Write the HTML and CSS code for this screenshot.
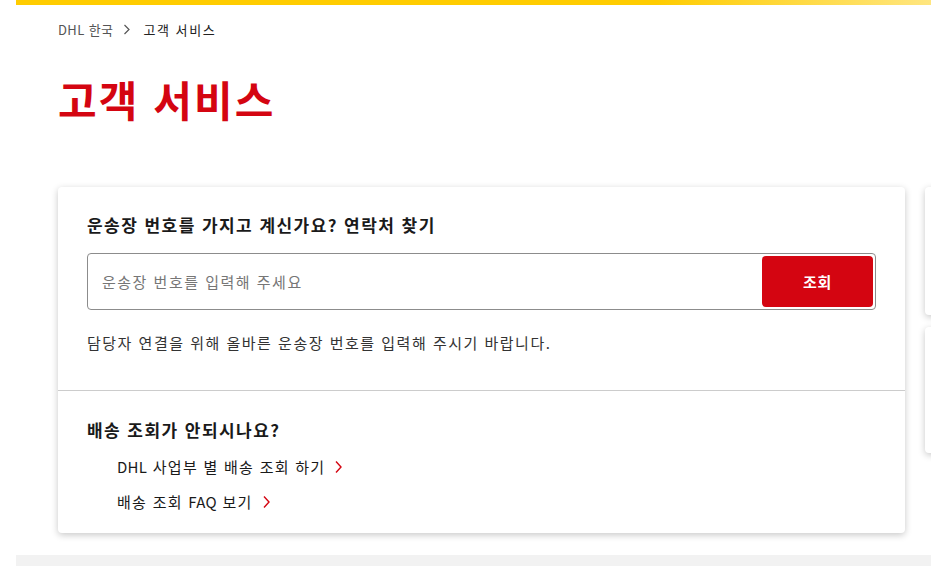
FILE: index.html
```html
<!DOCTYPE html>
<html lang="ko">
<head>
  <meta charset="UTF-8" />
  <meta name="viewport" content="width=device-width, initial-scale=1.0"/>
  <title>고객 서비스 | DHL 한국</title>
  <link rel="stylesheet" href="styles.css">
</head>
<body>
  <div class="page">
    <!-- ================== Top brand bar ================== -->
    <div class="top-bar"></div>

    <div class="content">
      <!-- ================== Breadcrumb ================== -->
      <nav class="breadcrumb">
        <a href="#">DHL 한국</a>
        <svg class="crumb-arrow" width="8" height="11" viewBox="0 0 8 11"><path d="M1.5 1 L6 5.5 L1.5 10" fill="none" stroke="#555" stroke-width="1.2"/></svg>
        <span class="current">고객 서비스</span>
      </nav>

      <h1 class="page-title">고객 서비스</h1>

      <div class="card-row">
        <!-- ================== Tracking card ================== -->
        <div class="card">
          <section class="card-section">
            <h3>운송장 번호를 가지고 계신가요? 연락처 찾기</h3>
            <form class="track-form" onsubmit="return false;">
              <input type="text" placeholder="운송장 번호를 입력해 주세요" />
              <button type="submit">조회</button>
            </form>
            <p class="hint">담당자 연결을 위해 올바른 운송장 번호를 입력해 주시기 바랍니다.</p>
          </section>

          <section class="card-section second">
            <h3>배송 조회가 안되시나요?</h3>
            <ul class="link-list">
              <li><a href="#"><span><span class="latin">DHL</span> 사업부 별 배송 조회 하기</span> <svg width="9" height="14" viewBox="0 0 9 14"><path d="M2 1.5 L7 7 L2 12.5" fill="none" stroke="#d40511" stroke-width="1.4"/></svg></a></li>
              <li><a href="#"><span>배송 조회 <span class="latin">FAQ</span> 보기</span> <svg width="9" height="14" viewBox="0 0 9 14"><path d="M2 1.5 L7 7 L2 12.5" fill="none" stroke="#d40511" stroke-width="1.4"/></svg></a></li>
            </ul>
          </section>
        </div>

        <!-- ================== Side cards (cut off) ================== -->
        <div class="side-col">
          <div class="side-card tall"></div>
          <div class="side-card"></div>
        </div>
      </div>
    </div>

    <div class="footer-band"></div>
  </div>
</body>
</html>
```

FILE: styles.css
```css
* {
  box-sizing: border-box;
}
body {
  margin: 0;
  font-family: "Noto Sans CJK KR", "Noto Sans", Arial, sans-serif;
  color: #1a1a1a;
  background-color: #fff;
  overflow: hidden;
}
.page {
  padding-left: 16px;
  width: 931px;
  height: 566px;
  overflow: hidden;
}
.top-bar {
  height: 5px;
  background: linear-gradient(90deg, #ffcc00 0%, #ffcc00 70%, #ffe680 100%);
}
.content {
  padding: 0 0 0 42px;
}
.breadcrumb {
  display: flex;
  align-items: center;
  gap: 10px;
  height: 20px;
  margin-top: 14px;
  font-size: 13px;
  letter-spacing: 0.08em;
}
.breadcrumb a {
  color: #555;
  text-decoration: none;
  letter-spacing: 0.03em;
}
.breadcrumb .current {
  color: #222;
  margin-left: 2px;
  letter-spacing: 0.12em;
}
.page-title {
  margin: 30px 0 0;
  font-size: 42px;
  line-height: 60px;
  font-weight: 700;
  color: #d40511;
  letter-spacing: 0.05em;
}
.card-row {
  display: flex;
  gap: 20px;
  margin-top: 58px;
}
.card {
  flex: 0 0 847px;
  background: #fff;
  border-radius: 4px;
  box-shadow: 0 2px 7px rgba(0,0,0,0.22);
}
.card-section {
  padding: 26px 29px 36px;
}
.card-section.second {
  border-top: 1px solid #cccccc;
  padding-top: 27px;
  padding-bottom: 9px;
}
.card-section h3 {
  margin: 0;
  font-size: 17px;
  line-height: 24px;
  font-weight: 700;
  color: #1a1a1a;
  letter-spacing: 0.085em;
}
.track-form {
  display: flex;
  margin-top: 16px;
  height: 57px;
  padding: 2px;
  border: 1px solid #8c8c8c;
  border-radius: 4px;
}
.track-form input {
  flex: 1;
  border: none;
  outline: none;
  padding: 0 12px;
  font-family: inherit;
  font-size: 15px;
  color: #333;
  letter-spacing: 0.1em;
}
.track-form input::placeholder {
  color: #767676;
}
.track-form button {
  width: 111px;
  border: none;
  border-radius: 4px;
  background-color: #d40511;
  color: #fff;
  font-family: inherit;
  font-size: 15px;
  font-weight: 700;
  letter-spacing: 0.05em;
  cursor: pointer;
}
.hint {
  margin: 22px 0 0;
  font-size: 15px;
  line-height: 22px;
  color: #333;
  letter-spacing: 0.1em;
}
.link-list {
  list-style: none;
  margin: 12px 0 0;
  padding: 0 0 0 30px;
}
.link-list li {
  height: 35px;
  line-height: 24px;
}
.link-list a {
  display: inline-flex;
  align-items: center;
  gap: 9px;
  font-size: 15px;
  color: #1a1a1a;
  text-decoration: none;
  letter-spacing: 0.085em;
}
.link-list .latin {
  letter-spacing: 0.02em;
}
.side-col {
  display: flex;
  flex-direction: column;
  gap: 12px;
  flex: 0 0 200px;
}
.side-card {
  height: 126px;
  background: #fff;
  border-radius: 4px;
  box-shadow: 0 2px 7px rgba(0,0,0,0.22);
}
.side-card.tall {
  height: 128px;
}
.footer-band {
  height: 30px;
  margin-top: 22px;
  background-color: #f2f2f2;
}
```
